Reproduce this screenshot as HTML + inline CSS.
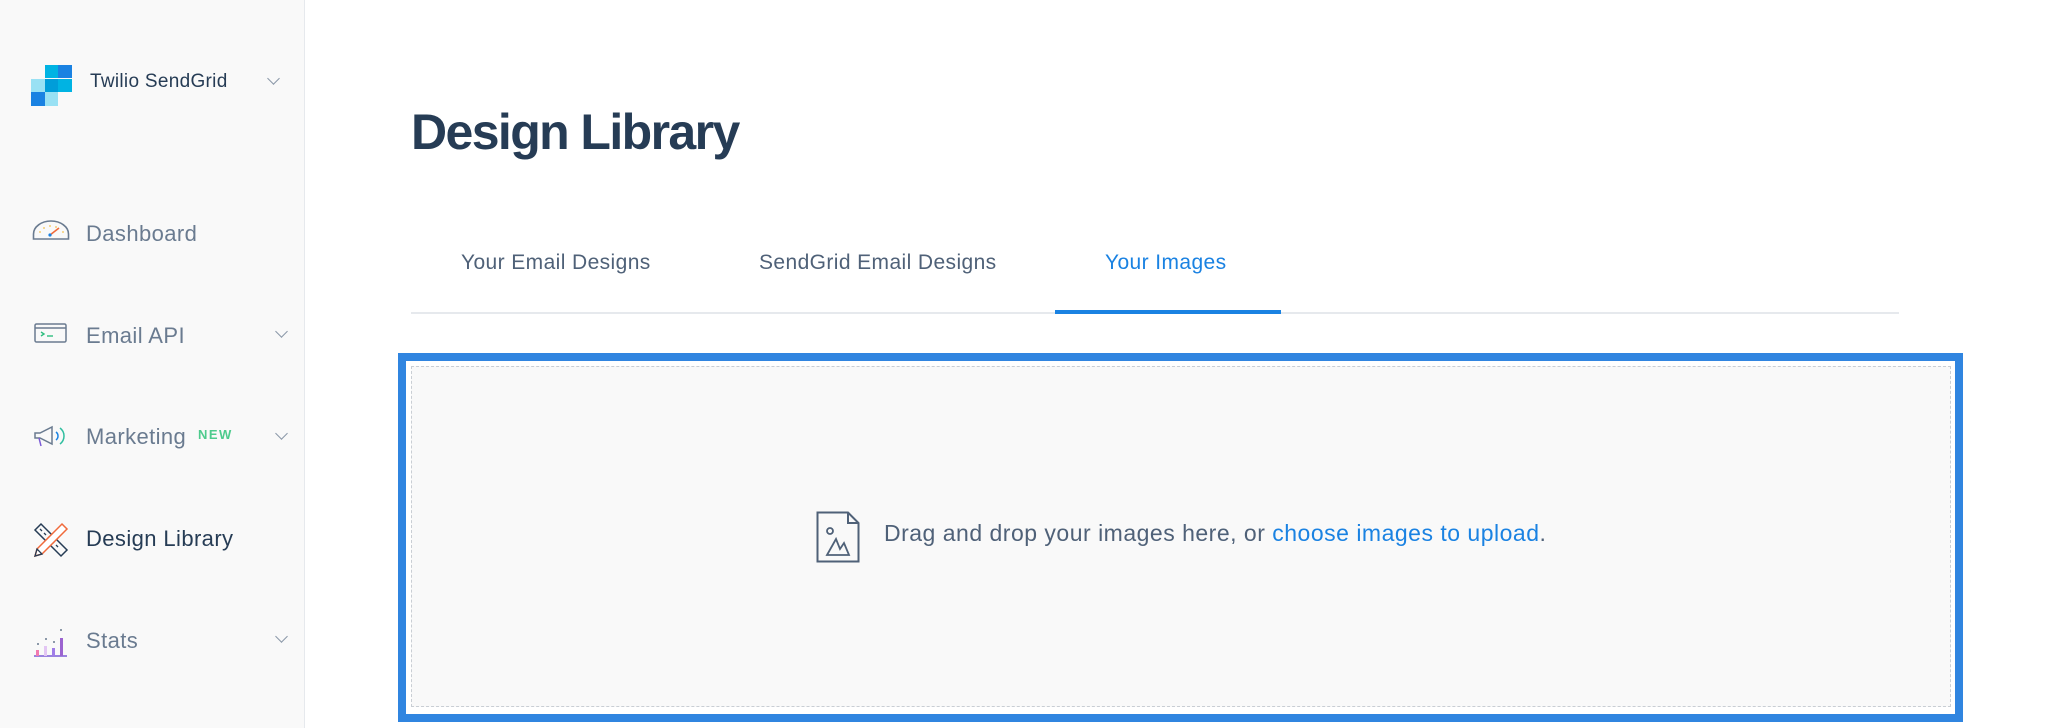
<!DOCTYPE html>
<html><head><meta charset="utf-8"><style>
*{margin:0;padding:0;box-sizing:border-box}
body{width:2048px;height:728px;background:#fff;font-family:"Liberation Sans",sans-serif;position:relative;overflow:hidden}
.sb{position:absolute;left:0;top:0;width:305px;height:728px;background:#f9f9f9;border-right:1px solid #e6e9ed}
.abs{position:absolute}
.nav{position:absolute;left:86px;font-size:22px;color:#6a7b90;line-height:1;letter-spacing:.4px}
.chev{position:absolute;width:9px;height:9px;border-right:1.6px solid #8a97a8;border-bottom:1.6px solid #8a97a8;transform:rotate(45deg)}
.tab{position:absolute;top:251px;font-size:21px;color:#4f6178;letter-spacing:.4px}
</style></head><body>
<div class="sb">
 <svg class="abs" style="left:31px;top:65px" width="41" height="41" viewBox="0 0 41 41">
  <rect x="14" y="0" width="13" height="13" fill="#00b3e3"/><rect x="27" y="0" width="14" height="13" fill="#1a82e2"/>
  <rect x="0" y="14" width="14" height="13" fill="#99e1f4"/><rect x="14" y="14" width="13" height="13" fill="#009dd9"/><rect x="27" y="14" width="14" height="13" fill="#00b3e3"/>
  <rect x="0" y="27" width="14" height="14" fill="#1a82e2"/><rect x="14" y="27" width="13" height="14" fill="#99e1f4"/>
 </svg>
 <div class="abs" style="left:90px;top:71px;font-size:19px;color:#263c55;letter-spacing:.3px">Twilio SendGrid</div>
 <div class="chev" style="left:269px;top:74px"></div>

 <svg class="abs" style="left:32px;top:220px" width="38" height="20" viewBox="0 0 38 20"><path d="M1.5 19 V14 A17.5 13 0 0 1 36.5 14 V19 Z" fill="none" stroke="#6a7b90" stroke-width="1.6"/><path d="M18 15 L27 8" stroke="#f06a3b" stroke-width="1.6"/><circle cx="18" cy="15" r="1.6" fill="#1a82e2"/><g fill="#f4c04c"><circle cx="8" cy="12" r=".9"/><circle cx="12" cy="8" r=".9"/><circle cx="18" cy="6" r=".9"/><circle cx="24" cy="7" r=".9"/><circle cx="31" cy="12" r=".9"/></g></svg>
 <div class="nav" style="top:223px">Dashboard</div>

 <svg class="abs" style="left:34px;top:323px" width="33" height="20" viewBox="0 0 33 20"><rect x="1" y="1" width="31" height="18" rx="1.5" fill="none" stroke="#6a7b90" stroke-width="1.5"/><path d="M1 5H32" stroke="#6a7b90" stroke-width="1.5"/><path d="M7 9l3 2-3 2" fill="none" stroke="#2fbe7f" stroke-width="1.4"/><path d="M13 13h6" stroke="#2fbe7f" stroke-width="1.4"/></svg>
 <div class="nav" style="top:325px">Email API</div>
 <div class="chev" style="left:277px;top:327px"></div>

 <svg class="abs" style="left:33px;top:424px" width="34" height="24" viewBox="0 0 34 24"><path d="M2 9h5l12-6v17L7 14H2z" fill="none" stroke="#6a7b90" stroke-width="1.5"/><path d="M6 14l2 8" stroke="#7b5cd6" stroke-width="1.5"/><path d="M23 8a5 5 0 0 1 0 8" fill="none" stroke="#1a82e2" stroke-width="1.5"/><path d="M27 4a10 10 0 0 1 0 16" fill="none" stroke="#2fbe9f" stroke-width="1.5"/></svg>
 <div class="nav" style="top:426px">Marketing</div>
 <div class="abs" style="left:198px;top:427px;font-size:13px;font-weight:bold;color:#4ecb8d;letter-spacing:1.5px">NEW</div>
 <div class="chev" style="left:277px;top:429px"></div>

 <svg class="abs" style="left:33px;top:522px" width="36" height="36" viewBox="0 0 36 36"><path d="M2 8l6-6 26 26-6 6z" fill="none" stroke="#263c55" stroke-width="1.5"/><path d="M7 7l2 2M11 11l2 2M15 15l2 2M19 19l2 2M23 23l2 2" stroke="#263c55" stroke-width="1.3"/><path d="M29 2l5 5L9 32l-7 2 2-7z" fill="#fff" stroke="#f06a3b" stroke-width="1.5"/><path d="M2 34l2-7 5 5z" fill="none" stroke="#263c55" stroke-width="1.3"/></svg>
 <div class="nav" style="top:528px;color:#263c55">Design Library</div>

 <svg class="abs" style="left:33px;top:624px" width="36" height="34" viewBox="0 0 36 34"><path d="M1 32H34" stroke="#7b5cd6" stroke-width="1.6"/><rect x="3" y="26" width="3" height="6" fill="#f27ab0"/><rect x="11" y="22" width="3" height="10" fill="#e3c6f4"/><rect x="19" y="24" width="3" height="8" fill="#a07de8"/><rect x="27" y="14" width="3" height="18" fill="#9c64d0"/><g fill="#6a7b90"><circle cx="5" cy="20" r="1"/><circle cx="13" cy="15" r="1"/><circle cx="21" cy="18" r="1"/><circle cx="28" cy="6" r="1"/></g></svg>
 <div class="nav" style="top:630px">Stats</div>
 <div class="chev" style="left:277px;top:632px"></div>
</div>

<div class="abs" style="left:411px;top:103px;font-size:50px;font-weight:bold;color:#263c55;letter-spacing:-1.6px">Design Library</div>

<div class="tab" style="left:461px">Your Email Designs</div>
<div class="tab" style="left:759px">SendGrid Email Designs</div>
<div class="tab" style="left:1105px;color:#1a82e2">Your Images</div>
<div class="abs" style="left:411px;top:312px;width:1488px;height:2px;background:#e6e9ed"></div>
<div class="abs" style="left:1055px;top:310px;width:226px;height:4px;background:#1a82e2"></div>

<div class="abs" style="left:398px;top:353px;width:1565px;height:369px;border:8px solid #3085e0;background:#fff"></div>
<div class="abs" style="left:411px;top:366px;width:1540px;height:341px;border:1px dashed #c9ced4;background:#f9f9f9"></div>

<svg class="abs" style="left:816px;top:511px" width="44" height="52" viewBox="0 0 44 52"><path d="M1.5 1.5H32L42.5 12V50.5H1.5Z" fill="none" stroke="#4f6178" stroke-width="2"/><path d="M32 1.5V12H42.5" fill="none" stroke="#4f6178" stroke-width="2"/><circle cx="14" cy="20" r="3" fill="none" stroke="#4f6178" stroke-width="1.8"/><path d="M11 44l9-16 4 10 4-6 5 12z" fill="none" stroke="#4f6178" stroke-width="1.8"/></svg>
<div class="abs" style="left:884px;top:520px;font-size:23px;color:#4f6178;white-space:nowrap;letter-spacing:.5px">Drag and drop your images here, or <span style="color:#1a82e2">choose images to upload</span>.</div>
</body></html>
